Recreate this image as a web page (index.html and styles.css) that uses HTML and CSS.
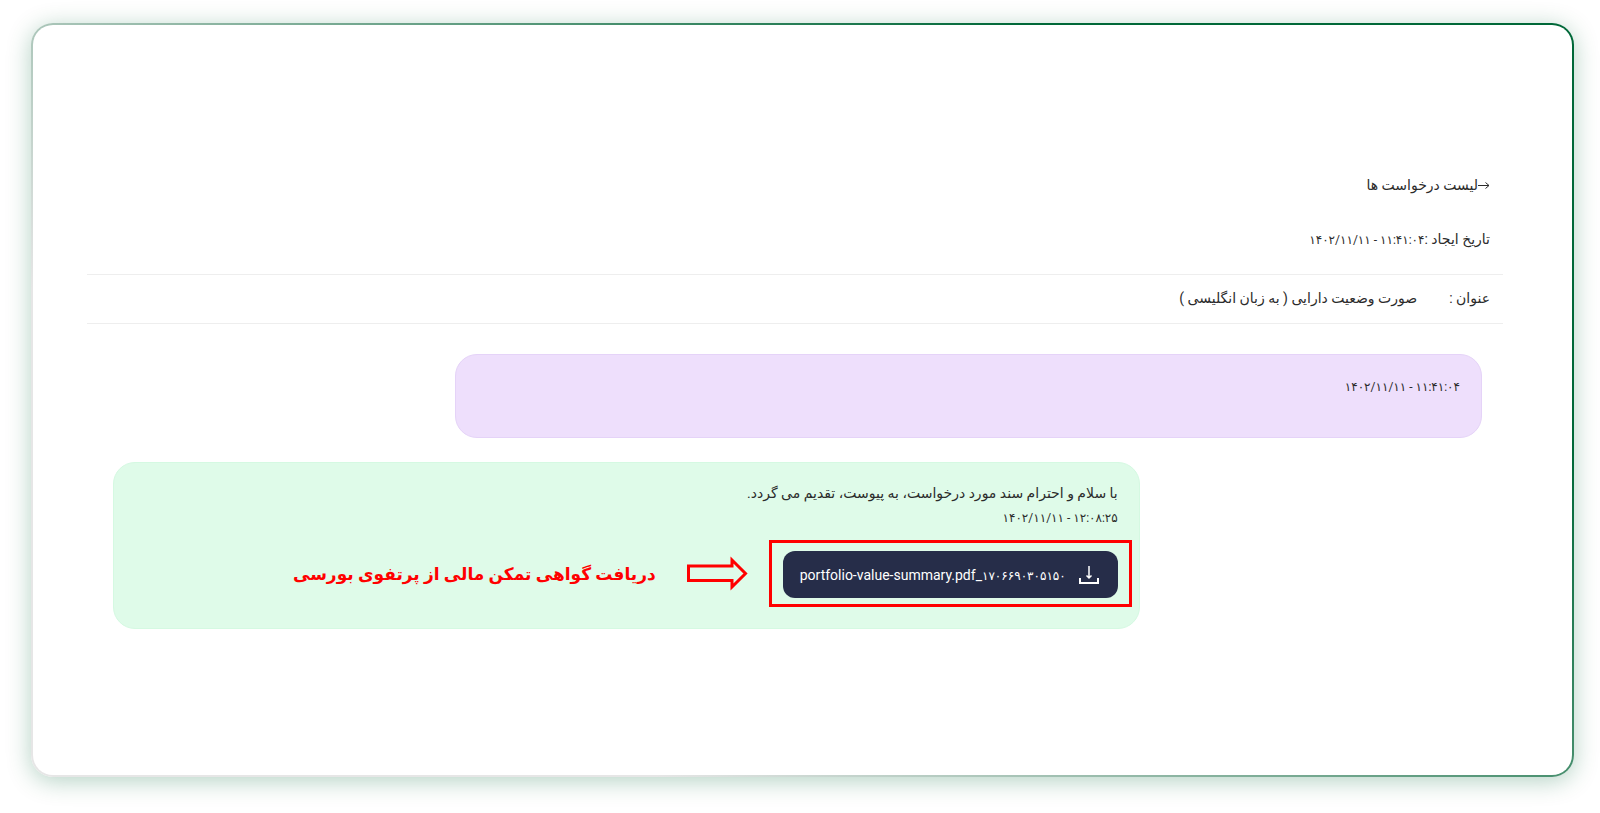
FILE: index.html
```html
<!DOCTYPE html>
<html lang="fa" dir="rtl">
<head>
<meta charset="utf-8">
<meta name="viewport" content="width=device-width, initial-scale=1">
<title>لیست درخواست ها</title>
<link rel="stylesheet" href="styles.css">
</head>
<body>
<main class="card">
  <a class="back" href="#"><svg class="back-icon" viewBox="0 0 12 12" aria-hidden="true"><path d="M0 6.5H11M7.5 3.5L11 6.5L7.5 9.5"/></svg><span>لیست درخواست ها</span></a>
  <p class="created">تاریخ ایجاد :<time class="digits" dir="ltr">۱۴۰۲/۱۱/۱۱ - ۱۱:۴۱:۰۴</time></p>
  <div class="subject">
    <span>عنوان :</span>
    <span>صورت وضعیت دارایی ( به زبان انگلیسی )</span>
  </div>
  <section class="thread">
    <article class="bubble bubble-user">
      <p class="line"><time class="digits" dir="ltr">۱۴۰۲/۱۱/۱۱ - ۱۱:۴۱:۰۴</time></p>
    </article>
    <article class="bubble bubble-reply">
      <p class="line">با سلام و احترام سند مورد درخواست، به پیوست، تقدیم می گردد.</p>
      <p class="line"><time class="digits" dir="ltr">۱۴۰۲/۱۱/۱۱ - ۱۲:۰۸:۲۵</time></p>
      <div class="attachment">
        <div class="highlight">
          <button class="download" type="button">
            <svg class="download-icon" viewBox="0 0 20 20" aria-hidden="true"><path class="shaft" d="M10 1V13M7.5 10.5L10 13L12.5 10.5"/><path class="tray" d="M1 13V18H19V13"/></svg>
            <span dir="ltr">portfolio-value-summary.pdf_<span class="digits">۱۷۰۶۶۹۰۳۰۵۱۵۰</span></span>
          </button>
        </div>
        <svg class="arrow" viewBox="0 0 61 35" aria-hidden="true"><path d="M1.5 10H45V4L58.5 17.5L45 31V24.5H1.5Z"/></svg>
        <strong class="note">دریافت گواهی تمکن مالی از پرتفوی بورسی</strong>
      </div>
    </article>
  </section>
</main>
</body>
</html>
```
FILE: styles.css
```css
* {
  box-sizing: border-box;
}

body {
  margin: 0;
  padding: 23px 26px 36px 31px;
  min-height: 100vh;
  display: flex;
  background: #fff;
  color: #2b2b2b;
  font: 14px/24px Roboto, "DejaVu Sans", sans-serif;
}

p {
  margin: 0;
}

.card {
  flex: 1;
  padding: 148px 69px 80px 54px;
  border: 2px solid transparent;
  border-radius: 22px;
  background:
    linear-gradient(#fff, #fff) padding-box,
    linear-gradient(38deg, #e6e6e6 25%, #006838 78%) border-box;
  box-shadow: 0 4px 24px rgba(0, 104, 56, 0.3);
}

.digits {
  font-size: 12px;
  line-height: 1;
}

.back {
  display: flex;
  align-items: center;
  width: fit-content;
  margin-inline-start: 13px;
  color: inherit;
  text-decoration: none;
}

.back-icon {
  width: 12px;
  height: 12px;
  fill: none;
  stroke: currentColor;
}

.created {
  margin-top: 30px;
  padding: 0 13px 23px;
  border-bottom: 1px solid #eee;
}

.subject {
  display: flex;
  gap: 32px;
  padding: 11px 13px 13px;
  border-bottom: 1px solid #eee;
}

.thread {
  display: flex;
  flex-direction: column;
  gap: 24px;
  padding: 30px 21px 0 26px;
}

.bubble {
  width: 75%;
  border: 1px solid;
  border-radius: 22px;
}

.bubble-user {
  padding: 19px 7px 39px;
  border-color: #e5d3f8;
  background: #eedffc;
}

.bubble-reply {
  align-self: flex-end;
  padding: 18px 7px 21px;
  border-color: #d5f9e2;
  background: #dffbe9;
}

.line {
  padding: 0 14px;
}

.attachment {
  display: flex;
  align-items: center;
  margin-top: 11px;
}

.highlight {
  padding: 8px 11px 6px;
  border: 3px solid #f00;
}

.download {
  display: flex;
  align-items: center;
  gap: 13px;
  height: 47px;
  padding: 0 19px 0 17px;
  border: 0;
  border-radius: 12px;
  background: #262d49;
  color: #fff;
  font: 14px/24px Roboto, "DejaVu Sans", sans-serif;
}

.download-icon {
  width: 20px;
  height: 20px;
  fill: none;
  stroke: #fff;
}

.shaft {
  stroke-width: 1.5;
}

.tray {
  stroke-width: 2;
}

.arrow {
  width: 61px;
  height: 35px;
  margin-inline: 21px 31px;
  fill: none;
  stroke: #f00;
  stroke-width: 3;
}

.note {
  color: #f00;
  font-size: 17px;
}
```
